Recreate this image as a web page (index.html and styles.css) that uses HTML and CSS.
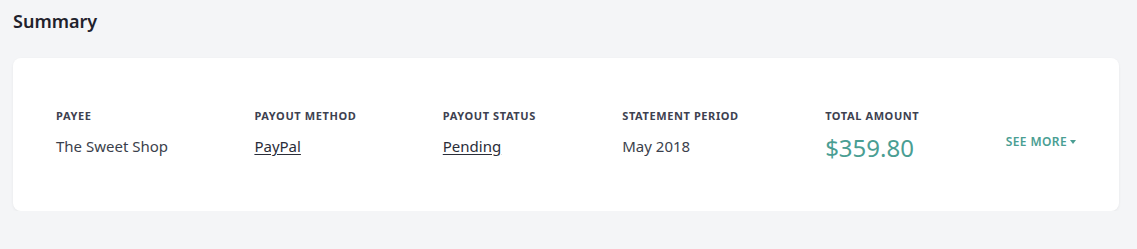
FILE: index.html
```html
<!DOCTYPE html>
<html lang="en">
<head>
<meta charset="utf-8">
<title>Summary</title>
<link rel="stylesheet" href="styles.css">
</head>
<body>
<main class="page">
  <h1 class="title">Summary</h1>
  <section class="card">
    <div class="col">
      <div class="label">PAYEE</div>
      <div class="value">The Sweet Shop</div>
    </div>
    <div class="col">
      <div class="label">PAYOUT METHOD</div>
      <div class="value"><a class="link" href="#">PayPal</a></div>
    </div>
    <div class="col">
      <div class="label">PAYOUT STATUS</div>
      <div class="value"><a class="link" href="#">Pending</a></div>
    </div>
    <div class="col">
      <div class="label">STATEMENT PERIOD</div>
      <div class="value">May 2018</div>
    </div>
    <div class="col">
      <div class="label">TOTAL AMOUNT</div>
      <div class="amount">$359.80</div>
    </div>
    <button class="more" type="button">SEE MORE <span class="caret"></span></button>
  </section>
</main>
</body>
</html>
```
FILE: styles.css
```css
html, body {
  margin: 0;
  padding: 0;
  background: #f4f5f7;
}
body {
  font-family: "Noto Sans", "Liberation Sans", sans-serif;
  color: #3b3f4c;
}
.page {
  padding: 9px 18px 0 13px;
}
.title {
  margin: 0;
  font-size: 18px;
  line-height: 24px;
  font-weight: 600;
  color: #1f222c;
}
.card {
  margin-top: 25px;
  width: 1106px;
  box-sizing: border-box;
  height: 153px;
  background: #fff;
  border-radius: 8px;
  box-shadow: 0 1px 3px rgba(0,0,0,0.06);
  padding: 51px 43px 0;
  display: flex;
  justify-content: space-between;
  align-items: flex-start;
}
.col {
  display: flex;
  flex-direction: column;
  gap: 13px;
}
.label {
  font-size: 11px;
  line-height: 14px;
  font-weight: 700;
  letter-spacing: 0.6px;
  color: #3d4150;
}
.value {
  font-size: 15px;
  line-height: 20px;
  color: #3b3f4c;
}
.link {
  color: #2a2d38;
  text-decoration: underline;
  text-underline-offset: 2px;
}
.amount {
  font-size: 24px;
  line-height: 24px;
  color: #4a9e93;
}
.more {
  border: 0;
  background: none;
  padding: 0;
  margin-top: 24px;
  font-family: inherit;
  font-size: 12px;
  font-weight: 600;
  letter-spacing: 0.4px;
  color: #4a9e93;
  display: flex;
  align-items: center;
  gap: 3px;
  cursor: pointer;
}
.caret {
  width: 0;
  height: 0;
  border-left: 3.5px solid transparent;
  border-right: 3.5px solid transparent;
  border-top: 4px solid #4a9e93;
}
```
